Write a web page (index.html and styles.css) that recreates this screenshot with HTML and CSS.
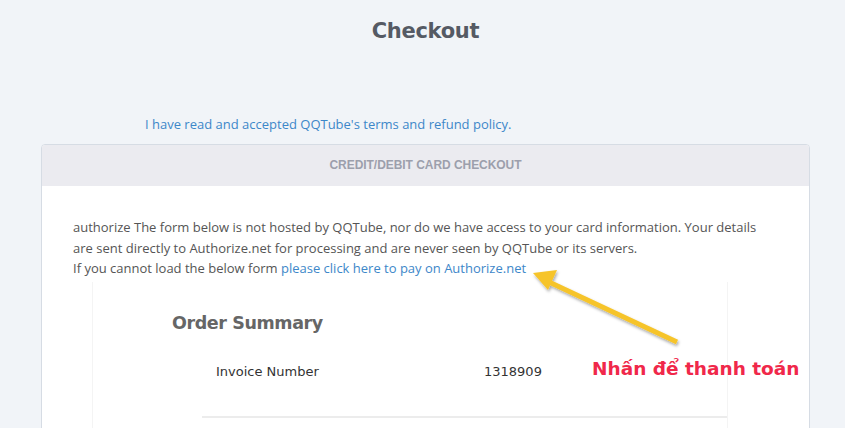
FILE: index.html
```html
<!DOCTYPE html>
<html lang="vi">
<head>
<meta charset="UTF-8">
<meta name="viewport" content="width=device-width, initial-scale=1.0">
<title>Checkout</title>
<link rel="stylesheet" href="styles.css">
</head>
<body>

<div id="page">
    <h1 class="page-title">Checkout</h1>

    <p class="terms"><a href="#">I have read and accepted QQTube's terms and refund policy.</a></p>

    <div class="card">
        <div class="card-header">Credit/Debit Card Checkout</div>
        <div class="card-body">
            <p class="notice">
                authorize The form below is not hosted by QQTube, nor do we have access to your card information. Your details are sent directly to Authorize.net for processing and are never seen by QQTube or its servers.<br>
                If you cannot load the below form <a href="#">please click here to pay on Authorize.net</a>
            </p>

            <div class="pay-frame">
                <h2 class="summary-title">Order Summary</h2>
                <div class="summary-row">
                    <span class="summary-label">Invoice Number</span>
                    <span class="summary-value">1318909</span>
                </div>
                <div class="summary-line"></div>
            </div>
        </div>
    </div>

    <!-- chu thich tren anh -->
    <svg class="hint-arrow" width="160" height="90" viewBox="0 0 160 90">
        <defs>
            <filter id="shadow" x="-20%" y="-20%" width="140%" height="140%">
                <feDropShadow dx="1" dy="2" stdDeviation="1.5" flood-color="#000" flood-opacity="0.35"/>
            </filter>
        </defs>
        <g filter="url(#shadow)">
            <line x1="150" y1="77" x2="22" y2="17" stroke="#f6c42b" stroke-width="5"/>
            <polygon points="6,8 30,5 21,25" fill="#f6c42b"/>
        </g>
    </svg>
    <div class="hint-text">Nhấn để thanh toán</div>
</div>

</body>
</html>
```

FILE: styles.css
```css
body {
    margin: 0;
    padding: 0;
    background: #f1f4f8;
    font-family: "Open Sans", "Noto Sans", sans-serif;
    color: #555;
}
#page {
    position: relative;
    padding: 0 35px 0 41px;
}
.page-title {
    margin: 0;
    padding-top: 19px;
    height: 39px;
    text-align: center;
    font-family: "DejaVu Sans", sans-serif;
    font-size: 21px;
    font-weight: bold;
    letter-spacing: -0.3px;
    color: #555a64;
}
.terms {
    margin: 0;
    padding: 57px 0 0 104px;
    height: 29px;
    font-size: 13px;
    line-height: 18px;
}
a {
    color: #3d87c9;
    text-decoration: none;
}
.card {
    border: 1px solid #d6dce4;
    border-radius: 4px;
    background: #fff;
    overflow: hidden;
    height: 300px;
}
.card-header {
    height: 41px;
    line-height: 40px;
    background: #ebebf0;
    text-align: center;
    text-transform: uppercase;
    font-family: "Liberation Sans", Arial, sans-serif;
    font-size: 12px;
    font-weight: bold;
    letter-spacing: -0.05px;
    color: #9c9fac;
}
.card-body {
    padding: 31px 0 0 31px;
}
.notice {
    margin: 0;
    padding-right: 42px;
    font-size: 13px;
    line-height: 20.5px;
    color: #555;
}
.pay-frame {
    margin: 3px 0 0 19px;
    width: 634px;
    height: 200px;
    border-left: 1px solid #f4f4f4;
    border-right: 1px solid #f4f4f4;
    font-family: "DejaVu Sans", sans-serif;
}
.summary-title {
    margin: 0;
    padding: 31px 0 0 79px;
    font-size: 17.5px;
    font-weight: bold;
    color: #666;
    letter-spacing: -0.4px;
}
.summary-row {
    display: flex;
    padding: 31px 0 0 123px;
    font-size: 13px;
    color: #333;
}
.summary-label {
    width: 268px;
}
.summary-line {
    margin: 37px 0 0 109px;
    height: 2px;
    background: #ececec;
}
.hint-arrow {
    position: absolute;
    left: 527px;
    top: 265px;
}
.hint-text {
    position: absolute;
    left: 592px;
    top: 358px;
    font-family: "DejaVu Sans", sans-serif;
    font-size: 18.5px;
    font-weight: bold;
    color: #f0284a;
}
```
